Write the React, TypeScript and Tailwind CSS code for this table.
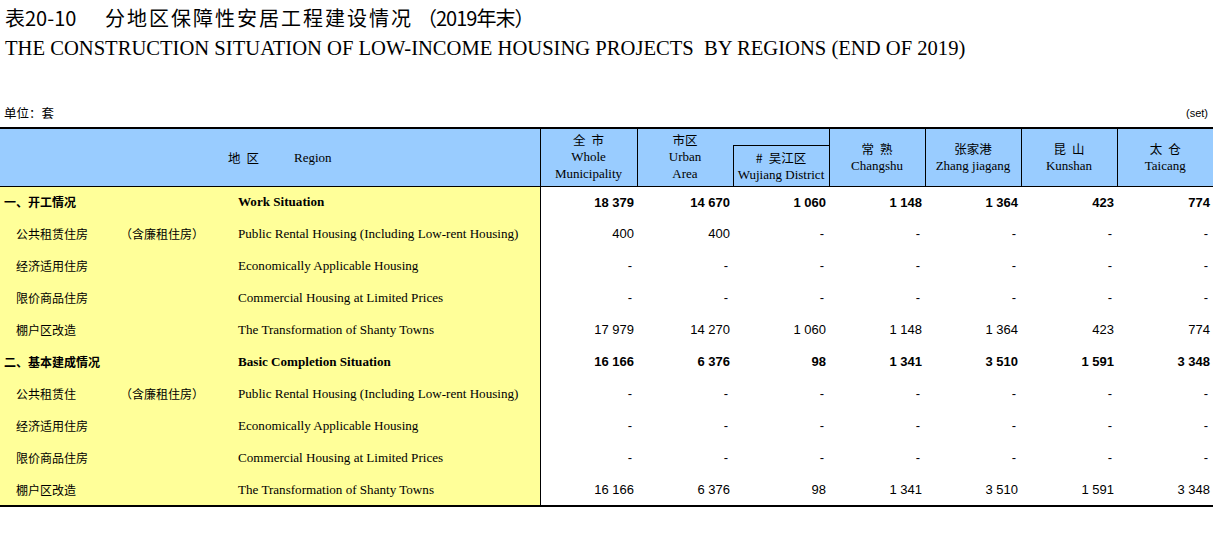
import React from "react";

type Row = { cn: string; note?: string; en: string; vals: string[]; bold?: boolean };

const ROWS: Row[] = [
  { cn: "一、开工情况", en: "Work Situation", vals: ["18 379", "14 670", "1 060", "1 148", "1 364", "423", "774"], bold: true },
  { cn: "公共租赁住房", note: "（含廉租住房）", en: "Public Rental Housing (Including Low-rent Housing)", vals: ["400", "400", "-", "-", "-", "-", "-"] },
  { cn: "经济适用住房", en: "Economically Applicable Housing", vals: ["-", "-", "-", "-", "-", "-", "-"] },
  { cn: "限价商品住房", en: "Commercial Housing at Limited Prices", vals: ["-", "-", "-", "-", "-", "-", "-"] },
  { cn: "棚户区改造", en: "The Transformation of Shanty Towns", vals: ["17 979", "14 270", "1 060", "1 148", "1 364", "423", "774"] },
  { cn: "二、基本建成情况", en: "Basic Completion Situation", vals: ["16 166", "6 376", "98", "1 341", "3 510", "1 591", "3 348"], bold: true },
  { cn: "公共租赁住", note: "（含廉租住房）", en: "Public Rental Housing (Including Low-rent Housing)", vals: ["-", "-", "-", "-", "-", "-", "-"] },
  { cn: "经济适用住房", en: "Economically Applicable Housing", vals: ["-", "-", "-", "-", "-", "-", "-"] },
  { cn: "限价商品住房", en: "Commercial Housing at Limited Prices", vals: ["-", "-", "-", "-", "-", "-", "-"] },
  { cn: "棚户区改造", en: "The Transformation of Shanty Towns", vals: ["16 166", "6 376", "98", "1 341", "3 510", "1 591", "3 348"] },
];

const cjk = "font-['Noto_Sans_CJK_SC',sans-serif]";
const serif = "font-['Liberation_Serif','Noto_Sans_CJK_SC',serif]";
const sans = "font-['Liberation_Sans',sans-serif]";

// Chinese header label: characters spread with a small gap, as in the print table
function CnLabel({ chars, spaced }: { chars: string[]; spaced?: boolean }) {
  return (
    <span className={`${cjk} text-[12.5px] leading-[16px] flex ${spaced ? "gap-[6px]" : ""}`}>
      {chars.map((c, i) => (
        <span key={i}>{c}</span>
      ))}
    </span>
  );
}

function HeadCell({ cn, spaced, en1, en2 }: { cn: string[]; spaced?: boolean; en1: string; en2?: string }) {
  return (
    <div className="flex flex-col items-center leading-[17px]">
      <CnLabel chars={cn} spaced={spaced} />
      <span className={`${serif} text-[13px]`}>{en1}</span>
      {en2 && <span className={`${serif} text-[13px]`}>{en2}</span>}
    </div>
  );
}

export default function App() {
  return (
    <div className="w-[1213px] h-[538px] bg-white text-black overflow-hidden">
      {/* Titles */}
      <div className={`${cjk} text-[20px] leading-[24px] pl-[5px] pt-[6px] flex items-baseline`}>
        <span className="w-[100px]">表20-10</span>
        <span className="tracking-[2px]">分地区保障性安居工程建设情况</span>
        <span className="ml-[4px] tracking-[-1px]">（2019年末）</span>
      </div>
      <div className={`${serif} text-[20.6px] leading-[24px] pl-[5px] pt-[6px]`}>
        THE CONSTRUCTION SITUATION OF LOW-INCOME HOUSING PROJECTS&nbsp; BY REGIONS (END OF 2019)
      </div>

      {/* Unit line */}
      <div className="flex justify-between items-end mt-[44px] px-[4px] h-[23px] pb-[7px]">
        <span className={`${cjk} text-[12.5px] leading-[14px]`}>单位：套</span>
        <span className={`${sans} text-[11px] leading-[14px] pr-[1px]`}>(set)</span>
      </div>

      <table className="table-fixed border-collapse w-[1213px]">
        <colgroup>
          <col className="w-[238px]" />
          <col className="w-[302px]" />
          <col className="w-[97px]" />
          <col className="w-[96px]" />
          <col className="w-[96px]" />
          <col className="w-[96px]" />
          <col className="w-[96px]" />
          <col className="w-[96px]" />
          <col className="w-[96px]" />
        </colgroup>
        <thead className="bg-[#99ccff]">
          <tr className="h-[17px] border-t-2 border-black">
            <th rowSpan={2} colSpan={2} className="border-r border-black font-normal">
              <div className="flex justify-center items-center gap-[35px] pl-[20px] pt-[1px]">
                <CnLabel chars={["地", "区"]} spaced />
                <span className={`${serif} text-[13px]`}>Region</span>
              </div>
            </th>
            <th rowSpan={2} className="border-r border-black font-normal align-top pt-[3px]">
              <HeadCell cn={["全", "市"]} spaced en1="Whole" en2="Municipality" />
            </th>
            <th rowSpan={2} className="font-normal align-top pt-[3px]">
              <HeadCell cn={["市区"]} en1="Urban" en2="Area" />
            </th>
            <th className="border-r border-black" />
            <th rowSpan={2} className="border-r border-black font-normal">
              <HeadCell cn={["常", "熟"]} spaced en1="Changshu" />
            </th>
            <th rowSpan={2} className="border-r border-black font-normal">
              <HeadCell cn={["张家港"]} en1="Zhang jiagang" />
            </th>
            <th rowSpan={2} className="border-r border-black font-normal">
              <HeadCell cn={["昆", "山"]} spaced en1="Kunshan" />
            </th>
            <th rowSpan={2} className="font-normal">
              <HeadCell cn={["太", "仓"]} spaced en1="Taicang" />
            </th>
          </tr>
          <tr className="h-[41px]">
            <th className="border-t border-l border-r border-black font-normal pt-[2px]">
              <HeadCell cn={["#", "吴江区"]} spaced en1="Wujiang District" />
            </th>
          </tr>
        </thead>
        <tbody className="border-t border-b-2 border-black">
          {ROWS.map((r, i) => (
            <tr key={i} className="h-[32px]">
              <td className={`bg-[#ffff99] ${cjk} text-[12px] whitespace-nowrap ${r.bold ? "font-bold pl-[4px]" : "pl-[16px]"}`}>
                {r.note ? (
                  <span className="flex">
                    <span className="w-[104px]">{r.cn}</span>
                    <span>{r.note}</span>
                  </span>
                ) : (
                  r.cn
                )}
              </td>
              <td className={`bg-[#ffff99] border-r border-black ${serif} text-[13.1px] whitespace-nowrap ${r.bold ? "font-bold" : ""}`}>
                {r.en}
              </td>
              {r.vals.map((v, j) => (
                <td
                  key={j}
                  className={`${sans} text-[13px] text-right whitespace-nowrap ${r.bold ? "font-bold" : ""} ${v === "-" ? "pr-[5px]" : "pr-[3px]"}`}
                >
                  {v}
                </td>
              ))}
            </tr>
          ))}
        </tbody>
      </table>
    </div>
  );
}
